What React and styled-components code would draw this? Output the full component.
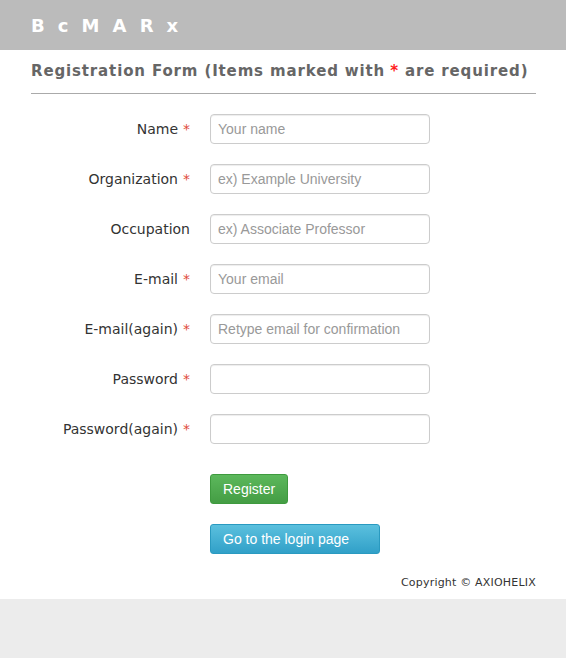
import React from "react";
import styled, { createGlobalStyle } from "styled-components";

const Global = createGlobalStyle`
  html, body { margin: 0; padding: 0; background: #ececec; }
  body { font-family: "DejaVu Sans", Verdana, sans-serif; }
`;

const Page = styled.div`
  background: #fff;
`;

const Header = styled.header`
  height: 50px;
  background: #bbbbbb;
  display: flex;
  align-items: center;
  padding-left: 31px;
`;

const Logo = styled.div`
  color: #fff;
  font: bold 18px "DejaVu Sans", Verdana, sans-serif;
  letter-spacing: 13.1px;
`;

const Main = styled.main`
  padding: 0 30px 0 31px;
`;

const Title = styled.h1`
  margin: 0;
  padding: 12px 0 13px;
  font: bold 15px "DejaVu Sans", Verdana, sans-serif;
  letter-spacing: 0.86px;
  color: #666;
  border-bottom: 1px solid #aaa;
`;

const Req = styled.span`
  color: ${(p) => (p.$title ? "#ff2020" : "#e04a3a")};
  margin-left: 5px;
`;

const Form = styled.form`
  display: grid;
  grid-template-columns: 159px 220px;
  column-gap: 20px;
  row-gap: 20px;
  padding-top: 20px;
  align-items: center;
`;

const Label = styled.label`
  text-align: right;
  font: 14px "DejaVu Sans", Verdana, sans-serif;
  color: #333;
`;

const Input = styled.input`
  box-sizing: border-box;
  width: 220px;
  height: 30px;
  border: 1px solid #ccc;
  border-radius: 4px;
  padding: 0 7px;
  font: 14px "Liberation Sans", Arial, sans-serif;
  color: #555;
  box-shadow: inset 0 1px 1px rgba(0, 0, 0, 0.075);
  &::placeholder { color: #999; }
`;

const Actions = styled.div`
  grid-column: 2;
  display: flex;
  flex-direction: column;
  align-items: flex-start;
  gap: 20px;
  padding-top: 10px;
`;

const Button = styled.button`
  height: 30px;
  padding: 0 12px;
  border-radius: 3px;
  font: 14px "Liberation Sans", Arial, sans-serif;
  color: #fff;
  cursor: pointer;
  border: 1px solid ${(p) => (p.$variant === "info" ? "#2a9ac0" : "#3e9a3e")};
  background: ${(p) =>
    p.$variant === "info"
      ? "linear-gradient(#5bc0de, #31a0c8)"
      : "linear-gradient(#5cb85c, #449d44)"};
  ${(p) => p.$wide && "width: 170px; text-align: left;"}
`;

const Footer = styled.footer`
  display: flex;
  justify-content: flex-end;
  padding: 22px 30px 10px 0;
  font: 11px "DejaVu Sans", Verdana, sans-serif;
  letter-spacing: 0.2px;
  color: #333;
`;

const Gray = styled.div`
  height: 59px;
  background: #ececec;
`;

const fields = [
  { label: "Name", req: true, ph: "Your name" },
  { label: "Organization", req: true, ph: "ex) Example University" },
  { label: "Occupation", req: false, ph: "ex) Associate Professor" },
  { label: "E-mail", req: true, ph: "Your email" },
  { label: "E-mail(again)", req: true, ph: "Retype email for confirmation" },
  { label: "Password", req: true, ph: "", type: "password" },
  { label: "Password(again)", req: true, ph: "", type: "password" },
];

export default function App() {
  return (
    <>
      <Global />
      <Page>
        <Header>
          <Logo>BcMARx</Logo>
        </Header>
        <Main>
          <Title>
            Registration Form (Items marked with<Req $title>*</Req> are required)
          </Title>
          <Form onSubmit={(e) => e.preventDefault()}>
            {fields.map((f) => (
              <React.Fragment key={f.label}>
                <Label>
                  {f.label}
                  {f.req && <Req>*</Req>}
                </Label>
                <Input type={f.type || "text"} placeholder={f.ph} />
              </React.Fragment>
            ))}
            <Actions>
              <Button type="submit">Register</Button>
              <Button type="button" $variant="info" $wide>
                Go to the login page
              </Button>
            </Actions>
          </Form>
        </Main>
        <Footer>Copyright © AXIOHELIX</Footer>
      </Page>
      <Gray />
    </>
  );
}
